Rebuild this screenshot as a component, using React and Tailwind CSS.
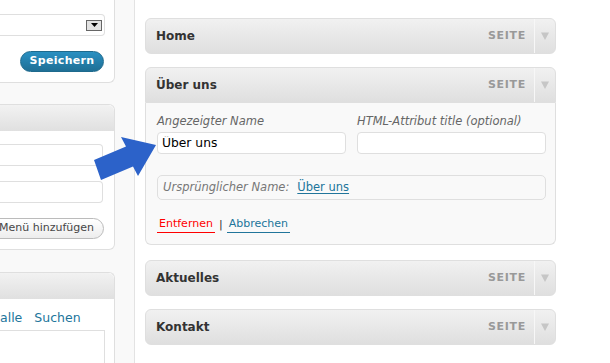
const menuItems = ["Home", "Über uns", "Aktuelles", "Kontakt"];

const ItemHeader = ({ title, open }) => (
  <div
    className={`flex h-[36px] items-center border border-[#dfdfdf] bg-linear-to-b from-[#f1f1f1] to-[#dfdfdf] ${
      open ? "rounded-t-[6px]" : "rounded-[6px]"
    }`}
  >
    <span className="flex-1 pl-[10px] text-[12px] font-bold text-[#333]">{title}</span>
    <span className="pr-[8px] text-[11px] font-bold tracking-[0.7px] text-[#999]">SEITE</span>
    <span className="flex h-full w-[21px] items-center justify-center border-l border-[#f7f7f7]">
      <svg width="8" height="8" viewBox="0 0 8 8">
        <path d="M0 0.5h8L4 8z" fill="#c6c6c6" />
      </svg>
    </span>
  </div>
);

const ItemBody = () => (
  <div className="rounded-b-[6px] border border-t-0 border-[#dfdfdf] bg-[#f9f9f9] pt-[11px] pr-[9px] pb-[11px] pl-[11px]">
    <div className="grid grid-cols-2 gap-[11px]">
      <label className="flex flex-col">
        <span className="text-[11.5px] leading-[15px] italic text-[#666]">Angezeigter Name</span>
        <input
          readOnly
          value="Über uns"
          className="mt-[3px] h-[22px] rounded-[4px] border border-[#dfdfdf] bg-white px-[4px] text-[12.3px] text-black outline-none"
        />
      </label>
      <label className="flex flex-col">
        <span className="text-[11.5px] leading-[15px] italic text-[#666]">HTML-Attribut title (optional)</span>
        <input
          readOnly
          value=""
          className="mt-[3px] h-[22px] rounded-[4px] border border-[#dfdfdf] bg-white px-[4px] text-[12px] outline-none"
        />
      </label>
    </div>

    <div className="mt-[21px] flex h-[25px] items-center gap-[8px] rounded-[5px] border border-[#dfdfdf] px-[5px] text-[11.5px]">
      <span className="italic text-[#777]">Ursprünglicher Name:</span>
      <span className="text-[#21759b] underline underline-offset-2">Über uns</span>
    </div>

    <div className="mt-[17px] flex items-center text-[11px] leading-[14px]">
      <span className="border-b border-[#ff0000] px-[2px] pb-[1px] text-[#ff0000]">Entfernen</span>
      <span className="px-[4px] text-[#333]">|</span>
      <span className="border-b border-[#21759b] px-[2px] pb-[1px] text-[#21759b]">Abbrechen</span>
    </div>
  </div>
);

const SideInput = ({ className = "" }) => (
  <div className={`h-[22px] w-[103px] rounded-r-[4px] border border-l-0 border-[#dfdfdf] bg-white ${className}`} />
);

export default function App() {
  return (
    <div className="relative flex h-[363px] w-[610px] overflow-hidden bg-white font-['DejaVu_Sans',sans-serif]">
      {/* left column */}
      <div className="flex w-[135px] shrink-0 flex-col border-r border-[#e3e3e3] bg-[#f9f9f9]">
        <div className="w-[115px] rounded-br-[6px] border-r border-b border-[#dfdfdf] bg-white pr-[10px] pb-[10px]">
          <div className="mt-[14px] flex h-[22px] w-[105px] items-center justify-end rounded-r-[4px] border border-l-0 border-[#dfdfdf] bg-white pr-[2px]">
            <span className="flex h-[11px] w-[16px] items-center justify-center border border-[#666] bg-[#e2e2e2]">
              <svg width="7" height="4" viewBox="0 0 7 4">
                <path d="M0 0h7L3.5 4z" fill="#000" />
              </svg>
            </span>
          </div>
          <div className="mt-[15px] flex justify-end">
            <button className="h-[21px] w-[84px] rounded-full border border-[#1e6a8d] bg-linear-to-b from-[#2a90c2] to-[#1f6f95] text-[11px] font-bold tracking-[0.3px] text-white">
              Speichern
            </button>
          </div>
        </div>

        <div className="mt-[21px] w-[115px] rounded-r-[6px] border-y border-r border-[#dfdfdf] bg-white">
          <div className="h-[26px] rounded-tr-[6px] bg-linear-to-b from-[#f2f2f2] to-[#e0e0e0]" />
          <div className="flex flex-col pr-[10px] pb-[10px]">
            <SideInput className="mt-[13px]" />
            <SideInput className="mt-[15px]" />
            <div className="mt-[15px] flex justify-end">
              <button className="h-[21px] shrink-0 rounded-full border border-[#bbb] bg-linear-to-b from-white to-[#ededed] pr-[9px] pl-[12px] text-[11px] whitespace-nowrap text-[#464646]">
                Menü hinzufügen
              </button>
            </div>
          </div>
        </div>

        <div className="mt-[22px] w-[115px] rounded-tr-[6px] border-t border-r border-[#dfdfdf] bg-white">
          <div className="h-[26px] rounded-tr-[6px] bg-linear-to-b from-[#f2f2f2] to-[#e0e0e0]" />
          <div className="mt-[11px] flex gap-[12px] text-[12.5px] leading-[16px] whitespace-nowrap text-[#21759b]">
            <span>alle</span>
            <span>Suchen</span>
          </div>
          <div className="mt-[4px] h-[60px] w-[105px] border border-l-0 border-[#dfdfdf] bg-white" />
        </div>
      </div>

      {/* menu structure */}
      <div className="ml-[10px] flex w-[411px] flex-col pt-[18px]">
        {menuItems.map((item, i) => (
          <div key={item} className={i === 0 ? "" : i === 2 ? "mt-[15px]" : "mt-[13px]"}>
            <ItemHeader title={item} open={item === "Über uns"} />
            {item === "Über uns" && <ItemBody />}
          </div>
        ))}
      </div>

      {/* pointer arrow */}
      <svg
        className="pointer-events-none absolute left-[90px] top-[132px]"
        width="70"
        height="52"
        viewBox="90 132 70 52"
      >
        <polygon points="94,160 126,146.5 121,137 156,145 138,176 133,166.5 101,180" fill="#2c62c9" />
      </svg>
    </div>
  );
}
